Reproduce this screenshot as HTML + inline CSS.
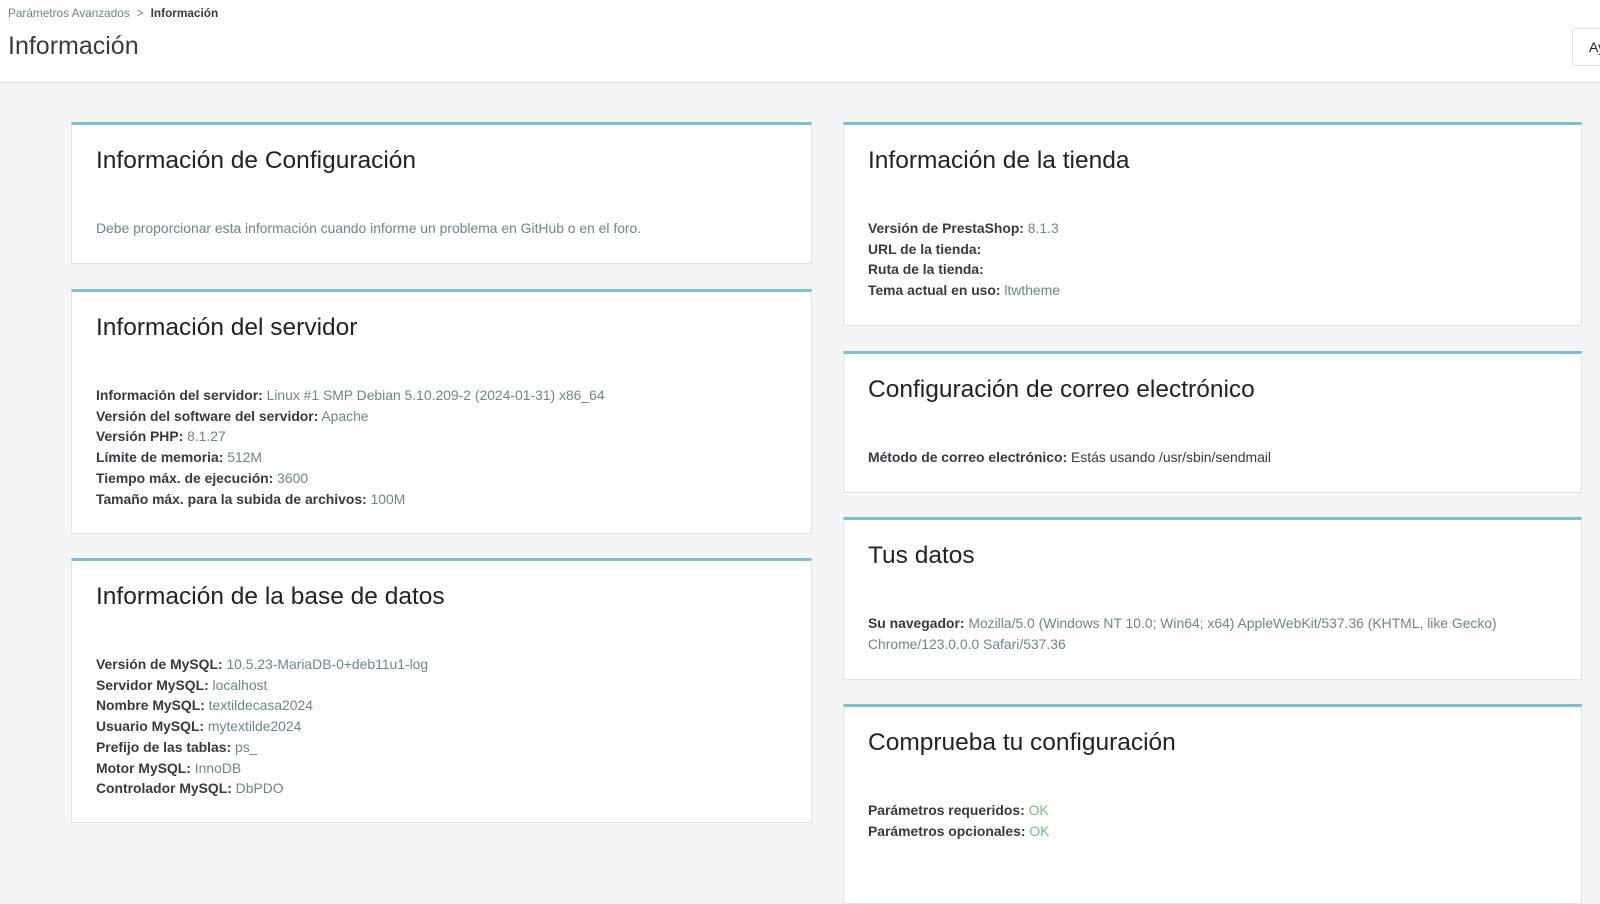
<!DOCTYPE html>
<html><head><meta charset="utf-8"><style>
*{margin:0;padding:0;box-sizing:border-box}
body{width:1600px;height:847px;overflow:hidden;background:#f5f5f5;font-family:"Liberation Sans",sans-serif;color:#363a41;position:relative}
.hdr{position:absolute;left:0;top:0;width:1600px;height:83px;background:#fff;border-bottom:1px solid #dfdfdf}
.bc{position:absolute;left:8px;top:6px;font-size:11.8px;color:#6c868e}
.bc b{color:#363a41}
.bc span{margin:0 7px}
.ttl{position:absolute;left:8px;top:32px;font-size:25px;color:#363a41}
.btn{position:absolute;left:1572px;top:28px;width:60px;height:38px;border:1px solid #dfdfdf;border-radius:3px;background:#fff;font-size:14px;padding:10px 16px;color:#222}
.card{position:absolute;background:#fff;border:1px solid #dbe6e9;border-top:3px solid #7cc0d4;padding:21px 24px 24px}
.card h3{font-size:24.5px;font-weight:normal;line-height:30px;color:#232323;margin-bottom:42px}
.card p{font-size:13.9px;line-height:20.7px;color:#6c868e}
.card p b{color:#363a41}
.ok{color:#72c279}
</style></head><body>
<div class="hdr">
<div class="bc">Parámetros Avanzados<span>&gt;</span><b>Información</b></div>
<div class="ttl">Información</div>
<div class="btn">Ay</div>
</div>

<div class="card" style="left:71px;top:122px;width:741px;height:142px">
<h3>Información de Configuración</h3>
<p>Debe proporcionar esta información cuando informe un problema en GitHub o en el foro.</p>
</div>

<div class="card" style="left:71px;top:289px;width:741px;height:245px">
<h3>Información del servidor</h3>
<p><b>Información del servidor:</b> Linux #1 SMP Debian 5.10.209-2 (2024-01-31) x86_64<br>
<b>Versión del software del servidor:</b> Apache<br>
<b>Versión PHP:</b> 8.1.27<br>
<b>Límite de memoria:</b> 512M<br>
<b>Tiempo máx. de ejecución:</b> 3600<br>
<b>Tamaño máx. para la subida de archivos:</b> 100M</p>
</div>

<div class="card" style="left:71px;top:558px;width:741px;height:265px">
<h3>Información de la base de datos</h3>
<p><b>Versión de MySQL:</b> 10.5.23-MariaDB-0+deb11u1-log<br>
<b>Servidor MySQL:</b> localhost<br>
<b>Nombre MySQL:</b> textildecasa2024<br>
<b>Usuario MySQL:</b> mytextilde2024<br>
<b>Prefijo de las tablas:</b> ps_<br>
<b>Motor MySQL:</b> InnoDB<br>
<b>Controlador MySQL:</b> DbPDO</p>
</div>

<div class="card" style="left:843px;top:122px;width:739px;height:204px">
<h3>Información de la tienda</h3>
<p><b>Versión de PrestaShop:</b> 8.1.3<br>
<b>URL de la tienda:</b><br>
<b>Ruta de la tienda:</b><br>
<b>Tema actual en uso:</b> ltwtheme</p>
</div>

<div class="card" style="left:843px;top:351px;width:739px;height:142px">
<h3>Configuración de correo electrónico</h3>
<p><b>Método de correo electrónico:</b> <span style="color:#363a41">Estás usando /usr/sbin/sendmail</span></p>
</div>

<div class="card" style="left:843px;top:517px;width:739px;height:163px">
<h3>Tus datos</h3>
<p><b>Su navegador:</b> Mozilla/5.0 (Windows NT 10.0; Win64; x64) AppleWebKit/537.36 (KHTML, like Gecko)<br>Chrome/123.0.0.0 Safari/537.36</p>
</div>

<div class="card" style="left:843px;top:704px;width:739px;height:200px">
<h3>Comprueba tu configuración</h3>
<p><b>Parámetros requeridos:</b> <span class="ok">OK</span><br>
<b>Parámetros opcionales:</b> <span class="ok">OK</span></p>
</div>
</body></html>
